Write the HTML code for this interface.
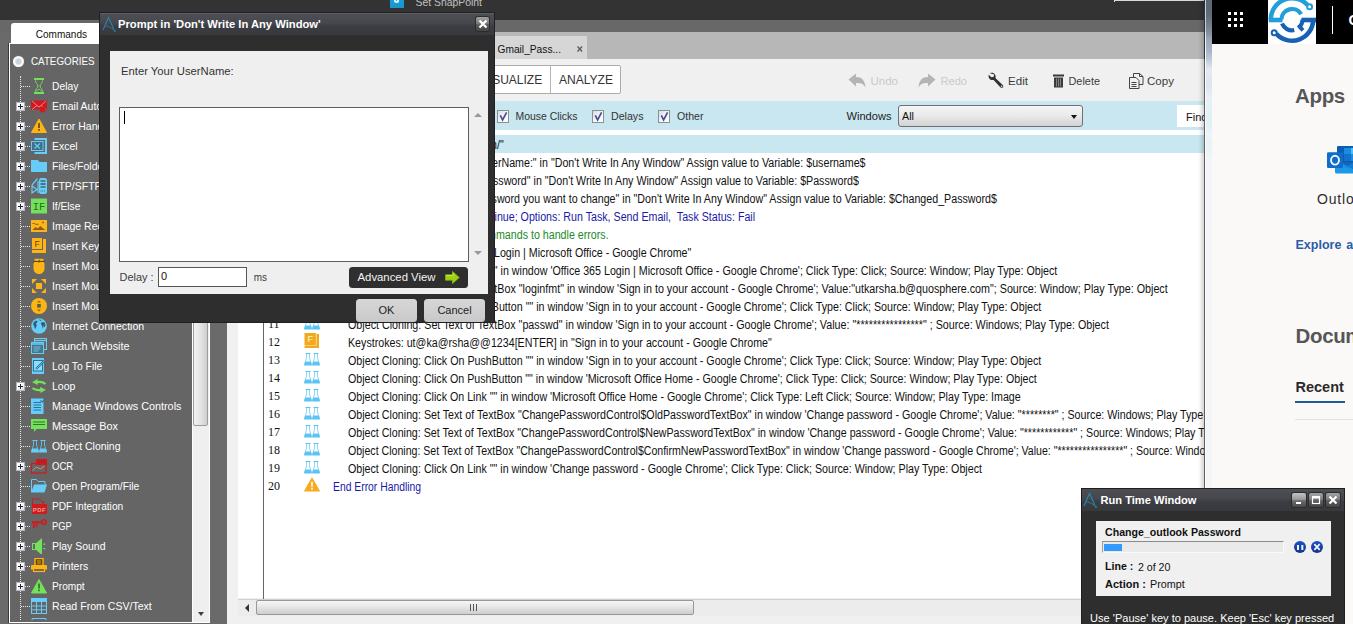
<!DOCTYPE html>
<html>
<head>
<meta charset="utf-8">
<title>Automation Anywhere</title>
<style>
html,body{margin:0;padding:0;}
body{width:1353px;height:624px;overflow:hidden;position:relative;background:#6a6a6a;font-family:"Liberation Sans",sans-serif;font-size:12px;color:#000;}
.a{position:absolute;}
.t{position:absolute;white-space:nowrap;line-height:1;}
/* sidebar */
#side{left:9px;top:43px;width:201px;height:580px;background:#656565;border:1px solid #fff;box-shadow:-1px 0 0 #3a3a3a;box-sizing:border-box;}
.ti{position:absolute;left:52px;color:#fff;font-size:11px;white-space:nowrap;line-height:14px;transform:scaleX(0.955);transform-origin:0 50%;}
.ic{position:absolute;left:31px;width:16px;height:16px;}
.pl{position:absolute;left:16px;width:7px;height:7px;border:1px solid #b4b4bc;background:linear-gradient(135deg,#ffffff 40%,#dcdce4);}
.pl:before{content:"";position:absolute;left:1px;top:3px;width:5px;height:1px;background:#223;}
.pl:after{content:"";position:absolute;left:3px;top:1px;width:1px;height:5px;background:#223;}
.dh{position:absolute;height:0;border-top:1px dotted #e8e8e8;}
/* list */
.row{position:absolute;left:238px;width:966px;height:18px;}
.ln{position:absolute;left:268px;font-family:"Liberation Serif",serif;font-size:12px;line-height:18px;color:#111;}
.lt{position:absolute;left:347px;font-size:12px;line-height:18px;white-space:nowrap;color:#111;transform-origin:0 50%;}
.li{position:absolute;left:304px;width:17px;height:16px;}
.cb{position:absolute;width:12.500px;height:12.500px;box-sizing:border-box;border:1px solid #8e8f8f;background:linear-gradient(135deg,#d4dae2,#f4f6f8 50%,#ffffff);}
.wb{width:13.500px;height:14px;border-radius:2px;background:linear-gradient(#a4a4a4,#7c7c7c 45%,#5c5c5c 55%,#444 100%);box-shadow:0 0 0 1px #2c2c2e;}
.btn{width:61px;height:22.5px;border-radius:3.5px;background:linear-gradient(#d6d6d6,#cfcfcf 60%,#c8c8c8);color:#1c1c1c;font-size:11px;line-height:23px;text-align:center;}
.btn span{display:inline-block;}
#x_snap{transform:translateX(0.50px) scaleX(0.9454);transform-origin:0 50%;}
#x_cmd{transform:translateX(0.75px) scaleX(0.9111);transform-origin:0 50%;}
#x_cat{transform:translateX(0.00px) scaleX(0.9328);transform-origin:0 50%;}
#x_tab{transform:translateX(0.50px) scaleX(0.9274);transform-origin:0 50%;}
#x_vis{transform:translateX(0.8px) scaleX(1.0);transform-origin:0 50%;}
#x_ana{transform:translateX(0.00px) scaleX(1.0038);transform-origin:0 50%;}
#x_undo{transform:translateX(-0.50px) scaleX(1.0458);transform-origin:0 50%;}
#x_redo{transform:translateX(-0.50px) scaleX(1.0077);transform-origin:0 50%;}
#x_edit{transform:translateX(0.00px) scaleX(1.0544);transform-origin:0 50%;}
#x_del{transform:translateX(0.50px) scaleX(0.9907);transform-origin:0 50%;}
#x_copy{transform:translateX(0.00px) scaleX(1.0511);transform-origin:0 50%;}
#x_mc{transform:translateX(0.50px) scaleX(0.9479);transform-origin:0 50%;}
#x_dl{transform:translateX(0.00px) scaleX(0.9665);transform-origin:0 50%;}
#x_ot{transform:translateX(0.00px) scaleX(0.9631);transform-origin:0 50%;}
#x_win{transform:translateX(0.50px) scaleX(1.0084);transform-origin:0 50%;}
#x_all{transform:translateX(0.00px) scaleX(0.9808);transform-origin:0 50%;}
#x_dt{transform:translateX(0.00px) scaleX(1.0185);transform-origin:0 50%;}
#x_eyu{transform:translateX(0.00px) scaleX(1.0244);transform-origin:0 50%;}
#x_dly{transform:translateX(0.50px) scaleX(0.9927);transform-origin:0 50%;}
#x_ms{transform:translateX(0.75px) scaleX(0.9031);transform-origin:0 50%;}
#x_adv{transform:translateX(0.50px) scaleX(1.0314);transform-origin:0 50%;}
#x_rtw{transform:translateX(0.50px) scaleX(1.0102);transform-origin:0 50%;}
#x_cop{transform:translateX(0.10px) scaleX(0.9617);transform-origin:0 50%;}
#x_use{transform:translateX(0.10px) scaleX(1.0037);transform-origin:0 50%;}
#x_ln{transform:translateX(0.00px) scaleX(0.9644);transform-origin:0 50%;}
#x_lv{transform:translateX(0.00px) scaleX(0.9631);transform-origin:0 50%;}
#x_ac{transform:translateX(0.00px) scaleX(0.9963);transform-origin:0 50%;}
#x_av{transform:translateX(0.00px) scaleX(0.9783);transform-origin:0 50%;}
</style>
</head>
<body>

<!-- ===== main app background ===== -->
<div class="a" id="topbar" style="left:0;top:0;width:1204px;height:20px;background:#333333;"></div>
<div class="a" style="left:0;top:20px;width:1204px;height:12px;background:#686868;"></div>
<div class="a" style="left:227px;top:32px;width:977px;height:27px;background:#b7b7b7;"></div>
<div class="a" style="left:227px;top:59px;width:977px;height:42px;background:#f0f0f0;"></div>
<div class="a" style="left:227px;top:101px;width:977px;height:29px;background:#c9e7f0;"></div>
<div class="a" style="left:227px;top:130px;width:977px;height:494px;background:#f0f0f0;"></div>
<div class="a" id="listbg" style="left:238px;top:130px;width:966px;height:468px;background:#ffffff;"></div>

<!-- SnapPoint -->
<div class="a" style="left:390px;top:-6px;width:13.500px;height:14px;background:linear-gradient(#16a6de,#1a94cc);"></div><div class="a" style="left:394px;top:-4px;width:5px;height:7px;border:2px solid #d8f0fa;border-top:0;border-radius:0 0 4px 4px;box-sizing:border-box;"></div>
<div class="t" id="x_snap" style="left:415px;top:-2.800px;font-size:11px;color:#c0c0c0;">Set SnapPoint</div>
<div class="a" style="left:1114px;top:0;width:90px;height:1px;background:#d8d8d8;"></div>
<div class="a" style="left:1114px;top:0;width:1px;height:2px;background:#d8d8d8;"></div>

<!-- ===== sidebar ===== -->
<div class="a" style="left:11px;top:23px;width:110px;height:21px;background:#ffffff;border-radius:3px 3px 0 0;z-index:2;"></div>
<div class="t" id="x_cmd" style="z-index:3;left:35px;top:28.5px;font-size:11px;color:#111;">Commands</div>
<div class="a" id="side"></div>
<div class="a" id="tree" style="left:0;top:0;width:193px;height:620px;overflow:hidden;">
<div class="a" style="left:13px;top:56px;width:11px;height:11px;border-radius:50%;background:radial-gradient(circle,#c4d2d5 0,#ccd9db 2.500px,#e8eeef 3.400px,#ffffff 4.200px,#f6f6f6 5.500px);box-shadow:0 0 1px #bbb;box-sizing:border-box;"></div>
<div class="t" id="x_cat" style="left:31px;top:55.8px;font-size:10.5px;color:#fff;">CATEGORIES</div>
<div class="a" style="left:20px;top:76px;width:0;height:548px;border-left:1px dotted #e8e8e8;"></div>
<div class="dh" style="left:21px;top:86px;width:9px;"></div>
<div class="ic" style="top:78px;"><svg width="16" height="16" viewBox="0 0 16 16" style="display:block;"><rect x="3" y="0" width="10" height="2" fill="#74e05c"/><rect x="3" y="14" width="10" height="2" fill="#74e05c"/><path d="M4.500 2.500c0 3 2.500 3.500 2.500 5.500s-2.500 2.500-2.500 5.500M11.500 2.500c0 3-2.500 3.500-2.500 5.500s2.500 2.500 2.500 5.500" fill="none" stroke="#74e05c" stroke-width="1"/><path d="M5 13.500l3-2.500 3 2.500" fill="none" stroke="#74e05c" stroke-width="0.900"/></svg></div>
<div class="ti" style="top:79px;transform:scaleX(0.934);">Delay</div>
<div class="dh" style="left:25px;top:106px;width:5px;"></div>
<div class="pl" style="top:102px;"></div>
<div class="ic" style="top:98px;"><svg width="16" height="16" viewBox="0 0 16 16" style="display:block;"><path d="M0 2.500h16v9h-16z" fill="#d11a1f"/><path d="M1 3l5 4.500-5 4M15 3l-5 4.500 5 4M6 7.500l2 1.500 2-1.500" fill="none" stroke="#f0a0a0" stroke-width="0.800"/><circle cx="11.500" cy="11.500" r="3" fill="#d11a1f"/></svg></div>
<div class="ti" style="top:99px;">Email Automation</div>
<div class="dh" style="left:25px;top:126px;width:5px;"></div>
<div class="pl" style="top:122px;"></div>
<div class="ic" style="top:118px;"><svg width="16" height="16" viewBox="0 0 16 16" style="display:block;"><path d="M8 1L15.500 14.500H0.500z" fill="#fdb515" stroke="#fdb515" stroke-width="1" stroke-linejoin="round"/><rect x="7.200" y="5" width="1.600" height="5" fill="#5a4208"/><rect x="7.200" y="11" width="1.600" height="1.700" fill="#5a4208"/></svg></div>
<div class="ti" style="top:119px;">Error Handling</div>
<div class="dh" style="left:25px;top:146px;width:5px;"></div>
<div class="pl" style="top:142px;"></div>
<div class="ic" style="top:138px;"><svg width="16" height="16" viewBox="0 0 16 16" style="display:block;"><path d="M3.500 1h11.500v14h-11.500" fill="none" stroke="#66cdf8" stroke-width="2"/><rect x="0.500" y="3.500" width="11.500" height="9" fill="#3f6f8c" stroke="#66cdf8" stroke-width="1"/><path d="M3.500 5.500l5.500 5M9 5.500l-5.500 5" stroke="#66cdf8" stroke-width="1.100"/></svg></div>
<div class="ti" style="top:139px;transform:scaleX(0.955);">Excel</div>
<div class="dh" style="left:25px;top:166px;width:5px;"></div>
<div class="pl" style="top:162px;"></div>
<div class="ic" style="top:158px;"><svg width="16" height="16" viewBox="0 0 16 16" style="display:block;"><path d="M0 2h7l1.500 2h7.500v10h-16z" fill="#66cdf8"/></svg></div>
<div class="ti" style="top:159px;">Files/Folders</div>
<div class="dh" style="left:25px;top:186px;width:5px;"></div>
<div class="pl" style="top:182px;"></div>
<div class="ic" style="top:178px;"><svg width="16" height="16" viewBox="0 0 16 16" style="display:block;"><rect x="8.500" y="0.500" width="7" height="15" rx="1.500" fill="#66cdf8" stroke="#66cdf8" stroke-width="1"/><rect x="9.500" y="2" width="5" height="2" fill="#3b8f7a"/><rect x="9.500" y="5" width="5" height="2" fill="#6a5aa0"/><rect x="9.500" y="8" width="5" height="2" fill="#3b8f7a"/><path d="M9.500 13h5" stroke="#3f6f8c" stroke-width="1" stroke-dasharray="1 0.700"/><path d="M6.500 0.500L1 7M7 3v12M1 8v7l5-3.500z" fill="none" stroke="#66cdf8" stroke-width="1.200"/></svg></div>
<div class="ti" style="top:179px;">FTP/SFTP</div>
<div class="dh" style="left:25px;top:206px;width:5px;"></div>
<div class="pl" style="top:202px;"></div>
<div class="ic" style="top:198px;"><svg width="16" height="16" viewBox="0 0 16 16" style="display:block;"><rect x="0" y="0.500" width="16" height="15" fill="#74e05c"/><text x="8" y="11.500" font-family="Liberation Mono,monospace" font-size="10.500" fill="#2a6e22" text-anchor="middle">IF</text></svg></div>
<div class="ti" style="top:199px;transform:scaleX(0.929);">If/Else</div>
<div class="dh" style="left:21px;top:226px;width:9px;"></div>
<div class="ic" style="top:218px;"><svg width="16" height="16" viewBox="0 0 16 16" style="display:block;"><rect x="0" y="2" width="16" height="12" fill="#fdb515"/><path d="M1.500 12l3-3 2 1.500 3-2.500 2 2 3 2z" fill="#8a5a20"/><path d="M1.500 5.500h2l1 0.800h3" fill="none" stroke="#8a5a20" stroke-width="1"/><path d="M11 4.500h2M12 3.500v2" stroke="#8a5a20" stroke-width="0.800"/></svg></div>
<div class="ti" style="top:219px;">Image Recognition</div>
<div class="dh" style="left:21px;top:246px;width:9px;"></div>
<div class="ic" style="top:238px;"><svg width="16" height="16" viewBox="0 0 16 16" style="display:block;"><rect x="1" y="0" width="10" height="11" fill="#fdb515"/><path d="M12 1h3v14h-14v-3h11z" fill="#fdb515"/><text x="6" y="8.800" font-family="Liberation Sans,sans-serif" font-size="8.500" fill="#5a4208" text-anchor="middle">F</text></svg></div>
<div class="ti" style="top:239px;">Insert Keystrokes</div>
<div class="dh" style="left:21px;top:266px;width:9px;"></div>
<div class="ic" style="top:258px;"><svg width="16" height="16" viewBox="0 0 16 16" style="display:block;"><path d="M2.500 7c0-3 1.500-5 5.500-5s5.500 2 5.500 5v3c0 3.500-2 6-5.500 6s-5.500-2.500-5.500-6z" fill="#fdb515"/><path d="M3.500 0.800h9v2h-9z" fill="#fdb515"/><path d="M2.500 3.500h11" stroke="#5a4208" stroke-width="1"/><path d="M9 2.200c-1.500-0.300-1.800 1.500-1 2.500" fill="none" stroke="#5a4208" stroke-width="0.900"/></svg></div>
<div class="ti" style="top:259px;">Insert Mouse Click</div>
<div class="dh" style="left:21px;top:286px;width:9px;"></div>
<div class="ic" style="top:278px;"><svg width="16" height="16" viewBox="0 0 16 16" style="display:block;"><rect x="5" y="5" width="6" height="6" fill="#fdb515"/><path d="M1 1h5l-5 5zM15 1v5l-5-5zM15 15h-5l5-5zM1 15v-5l5 5z" fill="#fdb515"/></svg></div>
<div class="ti" style="top:279px;">Insert Mouse Move</div>
<div class="dh" style="left:21px;top:306px;width:9px;"></div>
<div class="ic" style="top:298px;"><svg width="16" height="16" viewBox="0 0 16 16" style="display:block;"><circle cx="8" cy="8" r="8" fill="#fdb515"/><rect x="6.200" y="6" width="3.600" height="3.600" fill="#5b5b4a"/><path d="M8 2.500l2 2h-4zM8 13.500l2-2h-4z" fill="#8a6a10"/></svg></div>
<div class="ti" style="top:299px;">Insert Mouse Scroll</div>
<div class="dh" style="left:21px;top:326px;width:9px;"></div>
<div class="ic" style="top:318px;"><svg width="16" height="16" viewBox="0 0 16 16" style="display:block;"><circle cx="8" cy="8" r="7.800" fill="#66cdf8"/><path d="M2.500 4.500c1.500-1.500 3-2 4-1.500 0.500 1-0.500 1.500-1.500 2.500 0.500 1 1 1.500 0.500 2.500s-0.500 2-1 3c-1-0.500-0.800-2-1.500-3s-1-2.500-0.500-3.500zM10 5c1-1 2-1.500 3.500-0.500 1 1 1 3 0.500 4.500-0.500 0-1-0.500-1.200-1.500-0.500 0.500-0.300 2-1 3-0.500-1-0.500-2-1-3s-1.300-1.500-0.800-2.500zM8 1.500c1 0 2 0.300 2.500 1l-1.500 0.500z" fill="#3a5a70"/></svg></div>
<div class="ti" style="top:319px;transform:scaleX(0.96);">Internet Connection</div>
<div class="dh" style="left:21px;top:346px;width:9px;"></div>
<div class="ic" style="top:338px;"><svg width="16" height="16" viewBox="0 0 16 16" style="display:block;"><rect x="3.500" y="0.500" width="12" height="11" fill="none" stroke="#66cdf8" stroke-width="1"/><path d="M4 2.500h11" stroke="#66cdf8" stroke-width="1.400"/><rect x="0.500" y="4.500" width="12" height="11" fill="#4a7488" stroke="#66cdf8" stroke-width="1"/><path d="M1 6h11" stroke="#66cdf8" stroke-width="1.500"/><path d="M2.500 9h7M2.500 11h7M2.500 13h5" stroke="#66cdf8" stroke-width="0.900"/></svg></div>
<div class="ti" style="top:339px;transform:scaleX(0.985);">Launch Website</div>
<div class="dh" style="left:21px;top:366px;width:9px;"></div>
<div class="ic" style="top:358px;"><svg width="16" height="16" viewBox="0 0 16 16" style="display:block;"><rect x="1" y="0" width="12" height="16" fill="#66cdf8"/><rect x="2.500" y="2.500" width="9" height="10.500" fill="#8fdcfb" stroke="#2f6f95" stroke-width="1"/><path d="M5 11l8.500-8.500" stroke="#2f6f95" stroke-width="2.200"/><path d="M5.200 10.800l8.300-8.300" stroke="#66cdf8" stroke-width="0.800"/></svg></div>
<div class="ti" style="top:359px;transform:scaleX(0.936);">Log To File</div>
<div class="dh" style="left:25px;top:386px;width:5px;"></div>
<div class="pl" style="top:382px;"></div>
<div class="ic" style="top:378px;"><svg width="16" height="16" viewBox="0 0 16 16" style="display:block;"><path d="M14.500 6c-2-1.800-6-2.300-9-1.800" fill="none" stroke="#74e05c" stroke-width="2.200"/><path d="M6.500 1l-5.500 3.300 6 2.700z" fill="#74e05c"/><path d="M1.500 10c2 1.800 6 2.300 9 1.800" fill="none" stroke="#74e05c" stroke-width="2.200"/><path d="M9.500 15l5.500-3.300-6-2.700z" fill="#74e05c"/></svg></div>
<div class="ti" style="top:379px;transform:scaleX(0.957);">Loop</div>
<div class="dh" style="left:21px;top:406px;width:9px;"></div>
<div class="ic" style="top:398px;"><svg width="16" height="16" viewBox="0 0 16 16" style="display:block;"><rect x="0" y="0.500" width="12.500" height="15.500" fill="#66cdf8"/><path d="M2.500 4.500h7.500M2.500 7h7.500M2.500 9.500h7.500M2.500 12h7.500" stroke="#2f6f95" stroke-width="1.100"/><path d="M9.500 2.500l1.800 1.500 4-4" fill="none" stroke="#2f6f95" stroke-width="1.100"/></svg></div>
<div class="ti" style="top:399px;transform:scaleX(0.985);">Manage Windows Controls</div>
<div class="dh" style="left:21px;top:426px;width:9px;"></div>
<div class="ic" style="top:418px;"><svg width="16" height="16" viewBox="0 0 16 16" style="display:block;"><path d="M0 1h16v10h-10.500l-2.500 3v-3h-3z" fill="#74e05c"/><path d="M2 4h12M2 6.500h12" stroke="#2f7a2a" stroke-width="1.100"/></svg></div>
<div class="ti" style="top:419px;transform:scaleX(0.989);">Message Box</div>
<div class="dh" style="left:21px;top:446px;width:9px;"></div>
<div class="ic" style="top:438px;"><svg width="16" height="16" viewBox="0 0 16 16" style="display:block;"><path d="M1.5 2.500h5" fill="none" stroke="#66cdf8" stroke-width="1"/><path d="M2.5 3v4l-2.200 7h7.400l-2.200-7v-4" fill="none" stroke="#66cdf8" stroke-width="0.800"/><path d="M1.2 10.500h5.600l1.100 3.800h-7.800z" fill="#66cdf8"/><path d="M9.5 2.500h5" fill="none" stroke="#66cdf8" stroke-width="1"/><path d="M10.5 3v4l-2.200 7h7.400l-2.200-7v-4" fill="none" stroke="#66cdf8" stroke-width="0.800"/><path d="M9.2 10.500h5.600l1.100 3.800h-7.800z" fill="#66cdf8"/></svg></div>
<div class="ti" style="top:439px;transform:scaleX(0.949);">Object Cloning</div>
<div class="dh" style="left:25px;top:466px;width:5px;"></div>
<div class="pl" style="top:462px;"></div>
<div class="ic" style="top:458px;"><svg width="16" height="16" viewBox="0 0 16 16" style="display:block;"><rect x="5" y="1" width="11" height="6" fill="#d11a1f"/><path d="M8 2.500v3M10.500 2.500v3M13 2.500v3" stroke="#8a2a2a" stroke-width="0.900"/><rect x="0.500" y="5.500" width="14.500" height="9.500" fill="none" stroke="#d11a1f" stroke-width="1.200"/><path d="M1.500 12.500l4-3.500 4 2 4-3" fill="none" stroke="#c8a080" stroke-width="0.900"/></svg></div>
<div class="ti" style="top:459px;transform:scaleX(0.869);">OCR</div>
<div class="dh" style="left:21px;top:486px;width:9px;"></div>
<div class="ic" style="top:478px;"><svg width="16" height="16" viewBox="0 0 16 16" style="display:block;"><path d="M0.500 14v-12.500h5l1.500 2h7v3" fill="none" stroke="#66cdf8" stroke-width="1"/><path d="M3 6.500h13l-2.500 8h-13.500z" fill="#66cdf8"/></svg></div>
<div class="ti" style="top:479px;transform:scaleX(0.94);">Open Program/File</div>
<div class="dh" style="left:25px;top:506px;width:5px;"></div>
<div class="pl" style="top:502px;"></div>
<div class="ic" style="top:498px;"><svg width="16" height="16" viewBox="0 0 16 16" style="display:block;"><path d="M1.500 6v-5h7l3 3v2" fill="none" stroke="#d11a1f" stroke-width="1"/><circle cx="12.500" cy="4" r="0.900" fill="#d11a1f"/><rect x="1" y="6" width="15" height="10" fill="#d11a1f"/><text x="8.500" y="13.500" font-family="Liberation Sans,sans-serif" font-size="6" font-weight="bold" fill="#e8a08a" text-anchor="middle" letter-spacing="0.500">PDF</text></svg></div>
<div class="ti" style="top:499px;transform:scaleX(0.924);">PDF Integration</div>
<div class="dh" style="left:25px;top:526px;width:5px;"></div>
<div class="pl" style="top:522px;"></div>
<div class="ic" style="top:518px;"><svg width="16" height="16" viewBox="0 0 16 16" style="display:block;"><circle cx="13" cy="4" r="2.200" fill="none" stroke="#d11a1f" stroke-width="1.700"/><rect x="1" y="3.200" width="10" height="2" fill="#d11a1f"/><rect x="2" y="4" width="1.800" height="6" fill="#d11a1f"/><rect x="4.800" y="4" width="1.800" height="5" fill="#d11a1f"/></svg></div>
<div class="ti" style="top:519px;transform:scaleX(0.847);">PGP</div>
<div class="dh" style="left:25px;top:546px;width:5px;"></div>
<div class="pl" style="top:542px;"></div>
<div class="ic" style="top:538px;"><svg width="16" height="16" viewBox="0 0 16 16" style="display:block;"><rect x="1.500" y="5.500" width="3" height="6" fill="none" stroke="#74e05c" stroke-width="1"/><path d="M4.500 5.500l6.500-5.500v17l-6.500-5.500z" fill="#74e05c"/><rect x="12.500" y="5.500" width="1.600" height="1.300" fill="#74e05c"/><rect x="12.500" y="10" width="1.600" height="1.300" fill="#74e05c"/></svg></div>
<div class="ti" style="top:539px;transform:scaleX(0.951);">Play Sound</div>
<div class="dh" style="left:25px;top:566px;width:5px;"></div>
<div class="pl" style="top:562px;"></div>
<div class="ic" style="top:558px;"><svg width="16" height="16" viewBox="0 0 16 16" style="display:block;"><rect x="4" y="0.500" width="8" height="7" fill="#5a4208" stroke="#fdb515" stroke-width="1.400"/><path d="M6 3h4M6 5h4" stroke="#fdb515" stroke-width="0.900"/><path d="M1 7h14a1 1 0 0 1 1 1v3.500h-16v-3.500a1 1 0 0 1 1-1z" fill="#fdb515"/><rect x="2.500" y="10.500" width="11" height="3" fill="#656565" stroke="#fdb515" stroke-width="1.200"/></svg></div>
<div class="ti" style="top:559px;transform:scaleX(0.955);">Printers</div>
<div class="dh" style="left:25px;top:586px;width:5px;"></div>
<div class="pl" style="top:582px;"></div>
<div class="ic" style="top:578px;"><svg width="16" height="16" viewBox="0 0 16 16" style="display:block;"><path d="M8 1.500L15.500 15H0.500z" fill="#74e05c" stroke="#74e05c" stroke-width="1" stroke-linejoin="round"/><rect x="7.200" y="5.500" width="1.600" height="5" fill="#2a6e22"/><rect x="7.200" y="11.500" width="1.600" height="1.700" fill="#2a6e22"/></svg></div>
<div class="ti" style="top:579px;transform:scaleX(0.921);">Prompt</div>
<div class="dh" style="left:21px;top:606px;width:9px;"></div>
<div class="ic" style="top:598px;"><svg width="16" height="16" viewBox="0 0 16 16" style="display:block;"><rect x="0.500" y="0.500" width="15" height="15" fill="none" stroke="#66cdf8" stroke-width="1"/><rect x="0.500" y="0.500" width="15" height="3.500" fill="#66cdf8"/><path d="M5.500 0.500v15M10.500 0.500v15M0.500 8h15M0.500 11.800h15" stroke="#66cdf8" stroke-width="1"/></svg></div>
<div class="ti" style="top:599px;transform:scaleX(0.96);">Read From CSV/Text</div>
<div class="dh" style="left:21px;top:626px;width:9px;"></div>
<div class="ic" style="top:618px;"><svg width="16" height="16" viewBox="0 0 16 16" style="display:block;"><rect x="1" y="0.500" width="14" height="15" rx="1.500" fill="none" stroke="#66cdf8" stroke-width="1.200"/></svg></div>
<div class="ti" style="top:619px;">Read From XML</div>
</div>
<!-- sidebar scrollbar -->
<div class="a" style="left:192px;top:44px;width:18px;height:578px;background:#efefef;border-left:1px solid #fff;border-right:1px solid #fff;box-sizing:border-box;"></div>
<div class="a" style="left:193px;top:60px;width:15px;height:366px;border-radius:2px;background:linear-gradient(90deg,#f2f2f2,#e4e4e4 50%,#cfcfd2);border:1px solid #9c9c9c;box-sizing:border-box;"></div>
<div class="a" style="left:198px;top:612px;width:0;height:0;border-left:3.500px solid transparent;border-right:3.500px solid transparent;border-top:4px solid #404040;"></div>

<!-- ===== editor ===== -->
<div class="a" id="editor" style="left:0;top:0;width:1204px;height:624px;overflow:hidden;">
<!-- tab -->
<div class="a" style="left:440px;top:36px;width:147px;height:23px;background:#d6d6d6;"></div>
<div class="t" id="x_tab" style="left:497px;top:43.5px;font-size:11px;color:#111;">Gmail_Pass...</div>
<div class="a" style="left:577px;top:45.500px;"><svg width="6" height="6" viewBox="0 0 6 6" style="display:block"><path d="M0.500 0.500l4.600 5M5.100 0.500l-4.600 5" stroke="#5e5e5e" stroke-width="1.400"/></svg></div>
<!-- visualize / analyze -->
<div class="a" style="left:440px;top:65px;width:181px;height:29px;background:#fff;border:1px solid #acacac;box-sizing:border-box;border-radius:2px;"></div>
<div class="a" style="left:550px;top:65px;width:1px;height:29px;background:#b4b4b4;"></div>
<div class="t" id="x_vis" style="left:480px;top:73.600px;font-size:12px;color:#333;">VISUALIZE</div>
<div class="t" id="x_ana" style="left:559px;top:73.600px;font-size:12px;color:#333;">ANALYZE</div>
<!-- toolbar buttons -->
<div class="a" style="left:848px;top:73px;"><svg width="18" height="16" viewBox="0 0 18 16" style="display:block"><path d="M0.500 6.500L8 0.500v3.500c5.500 0 9 3 9.500 10.500c-2-4-5-5-9.500-4.500v3.500z" fill="#b4b4b4"/></svg></div>
<div class="t" id="x_undo" style="left:871px;top:75.6px;font-size:11px;color:#cacaca;">Undo</div>
<div class="a" style="left:918px;top:73px;"><svg width="18" height="16" viewBox="0 0 18 16" style="display:block"><path d="M17.500 6.500L10 0.500v3.500c-5.500 0-9 3-9.500 10.500c2-4 5-5 9.500-4.500v3.500z" fill="#b4b4b4"/></svg></div>
<div class="t" id="x_redo" style="left:941px;top:75.6px;font-size:11px;color:#cacaca;">Redo</div>
<div class="a" style="left:988px;top:72px;"><svg width="17" height="17" viewBox="0 0 17 17" style="display:block"><path d="M2 1.200c1.800-0.800 4-0.300 5 1.300 0.800 1.200 0.800 2.500 0.400 3.600l7.300 6.800c0.800 0.800 0.800 1.900 0.100 2.500-0.700 0.700-1.800 0.600-2.500-0.200l-6.700-7.300c-1.200 0.400-2.600 0.200-3.700-0.700-1.300-1.100-1.700-2.900-1.100-4.400l2.600 2.500 2.300-0.600 0.500-2.300z" fill="#333"/><circle cx="13.600" cy="14.200" r="0.800" fill="#f0f0f0"/></svg></div>
<div class="t" id="x_edit" style="left:1008px;top:75.6px;font-size:11px;color:#3c3c3c;">Edit</div>
<div class="a" style="left:1052.500px;top:73.500px;"><svg width="11" height="14" viewBox="0 0 11 14" style="display:block"><rect x="0" y="0.500" width="11" height="2" fill="#3a3a3a"/><rect x="1" y="3.500" width="9" height="10" fill="#3a3a3a"/><path d="M3.500 4.500v8M5.500 4.500v8M7.500 4.500v8" stroke="#9a9a9a" stroke-width="0.800"/></svg></div>
<div class="t" id="x_del" style="left:1068px;top:75.6px;font-size:11px;color:#3c3c3c;">Delete</div>
<div class="a" style="left:1128.500px;top:73px;"><svg width="15" height="16" viewBox="0 0 15 16" style="display:block"><path d="M4.500 4v-3.500h6l3.500 3v8h-4" fill="#f0f0f0" stroke="#444" stroke-width="1"/><path d="M10.500 0.500v3h3.500" fill="none" stroke="#444" stroke-width="1"/><path d="M0.500 4.500h6.500l3 3v8h-9.500z" fill="#f0f0f0" stroke="#444" stroke-width="1"/><path d="M2.500 9.500h5M2.500 11.500h5M2.500 13.500h5" stroke="#444" stroke-width="1"/></svg></div>
<div class="t" id="x_copy" style="left:1147px;top:75.6px;font-size:11px;color:#3c3c3c;">Copy</div>
<!-- filter bar -->
<div class="cb" style="left:496.5px;top:110px;"><svg width="11" height="11" viewBox="0 0 11 11" style="display:block"><path d="M2.300 4.300L4.600 8.800L8.600 1.300" fill="none" stroke="#4a4e98" stroke-width="1.700"/></svg></div>
<div class="t" id="x_mc" style="left:515px;top:110.8px;font-size:11px;color:#333;">Mouse Clicks</div>
<div class="cb" style="left:591.5px;top:110px;"><svg width="11" height="11" viewBox="0 0 11 11" style="display:block"><path d="M2.300 4.300L4.600 8.800L8.600 1.300" fill="none" stroke="#4a4e98" stroke-width="1.700"/></svg></div>
<div class="t" id="x_dl" style="left:611px;top:110.8px;font-size:11px;color:#333;">Delays</div>
<div class="cb" style="left:657.5px;top:110px;"><svg width="11" height="11" viewBox="0 0 11 11" style="display:block"><path d="M2.300 4.300L4.600 8.800L8.600 1.300" fill="none" stroke="#4a4e98" stroke-width="1.700"/></svg></div>
<div class="t" id="x_ot" style="left:677px;top:110.8px;font-size:11px;color:#333;">Other</div>
<div class="t" id="x_win" style="left:846px;top:110.8px;font-size:11px;color:#222;">Windows</div>
<div class="a" style="left:898px;top:105px;width:185px;height:22px;border:1px solid #707070;border-radius:3px;box-sizing:border-box;background:linear-gradient(#f6f6f6,#e9e9e9 50%,#d2d2d2);"></div>
<div class="t" id="x_all" style="left:902px;top:110.8px;font-size:11px;color:#111;">All</div>
<div class="a" style="left:1071px;top:115px;width:0;height:0;border-left:3.500px solid transparent;border-right:3.500px solid transparent;border-top:4px solid #111;"></div>
<div class="a" style="left:1177px;top:105px;width:30px;height:22px;background:#fff;"></div>
<div class="t" id="x_find" style="left:1186px;top:111.500px;font-size:11px;color:#111;">Find</div>
<!-- h scrollbar -->
<div class="a" style="left:238px;top:599px;width:966px;height:17px;background:#ececec;border-top:1px solid #d0d0d0;box-sizing:border-box;"></div>
<div class="a" style="left:256px;top:600px;width:438px;height:15px;border:1px solid #989898;border-radius:2px;box-sizing:border-box;background:linear-gradient(#f6f6f6,#e4e4e4 50%,#cdcdcd);"></div>
<div class="a" style="left:470px;top:604px;width:1px;height:7px;background:#555;box-shadow:3px 0 0 #555,6px 0 0 #555;"></div>
<div class="a" style="left:245px;top:604px;width:0;height:0;border-top:4px solid transparent;border-bottom:4px solid transparent;border-right:4px solid #333;"></div>

<div class="a" style="left:238px;top:135px;width:966px;height:18px;background:#c9e7f0;"></div>
<div class="a" style="left:263px;top:130px;width:1px;height:469px;background:#666;"></div>
<div class="ln" style="top:135px;">1</div>
<div class="lt" id="r1" style="left:341.3px;top:136px;color:#111;transform:scaleX(0.8892);">Open Browser: "portal.office.com/"</div>
<div class="ln" style="top:153px;">2</div>
<div class="li" style="top:154px;"><svg width="16" height="15" viewBox="0 0 16 15" style="display:block;"><path d="M8 1.200L15.300 14H0.700z" fill="#7ddc5c" stroke="#7ddc5c" stroke-width="1.200" stroke-linejoin="round"/><rect x="7.200" y="4.800" width="1.600" height="5" fill="#2f6a1e"/><rect x="7.200" y="10.800" width="1.600" height="1.700" fill="#2f6a1e"/></svg></div>
<div class="lt" id="r2" style="left:382.3px;top:154px;color:#111;transform:scaleX(0.8892);">Prompt: "Enter Your UserName:" in "Don't Write In Any Window" Assign value to Variable: $username$</div>
<div class="ln" style="top:171px;">3</div>
<div class="li" style="top:172px;"><svg width="16" height="15" viewBox="0 0 16 15" style="display:block;"><path d="M8 1.200L15.300 14H0.700z" fill="#7ddc5c" stroke="#7ddc5c" stroke-width="1.200" stroke-linejoin="round"/><rect x="7.200" y="4.800" width="1.600" height="5" fill="#2f6a1e"/><rect x="7.200" y="10.800" width="1.600" height="1.700" fill="#2f6a1e"/></svg></div>
<div class="lt" id="r3" style="left:383.3px;top:172px;color:#111;transform:scaleX(0.8892);">Prompt: "Enter Your Password" in "Don't Write In Any Window" Assign value to Variable: $Password$</div>
<div class="ln" style="top:189px;">4</div>
<div class="li" style="top:190px;"><svg width="16" height="15" viewBox="0 0 16 15" style="display:block;"><path d="M8 1.200L15.300 14H0.700z" fill="#7ddc5c" stroke="#7ddc5c" stroke-width="1.200" stroke-linejoin="round"/><rect x="7.200" y="4.800" width="1.600" height="5" fill="#2f6a1e"/><rect x="7.200" y="10.800" width="1.600" height="1.700" fill="#2f6a1e"/></svg></div>
<div class="lt" id="r4" style="left:384.3px;top:190px;color:#111;transform:scaleX(0.8892);">Prompt: "Enter the password you want to change" in "Don't Write In Any Window" Assign value to Variable: $Changed_Password$</div>
<div class="ln" style="top:207px;">5</div>
<div class="li" style="top:207px;"><svg width="16" height="15" viewBox="0 0 16 15" style="display:block;"><path d="M8 1.200L15.300 14H0.700z" fill="#f8a91e" stroke="#f8a91e" stroke-width="1.200" stroke-linejoin="round"/><rect x="7.200" y="4.800" width="1.600" height="5" fill="#fff"/><rect x="7.200" y="10.800" width="1.600" height="1.700" fill="#fff"/></svg></div>
<div class="lt" id="r5" style="left:332.2px;top:208px;color:#1a1aa6;transform:scaleX(0.8892);">Begin Error Handling; Action: Continue; Options: Run Task, Send Email,&nbsp; Task Status: Fail</div>
<div class="ln" style="top:225px;">6</div>
<div class="lt" id="r6" style="left:336.8px;top:226px;color:#1a8a2a;transform:scaleX(0.8892);">Comment: Please enter your commands to handle errors.</div>
<div class="ln" style="top:243px;">7</div>
<div class="lt" id="r7" style="left:354.0px;top:244px;color:#111;transform:scaleX(0.8892);">If Window Exists ("Office 365 Login | Microsoft Office - Google Chrome"</div>
<div class="ln" style="top:261px;">8</div>
<div class="li" style="top:263px;"><svg width="16" height="13" viewBox="0 0 16 13" style="display:block;"><path d="M1.5 0.500h5" fill="none" stroke="#5cc4f3" stroke-width="1"/><path d="M2.5 1v4l-2.200 7h7.400l-2.200-7v-4" fill="none" stroke="#6ccbf5" stroke-width="0.800"/><path d="M1.2 8.500h5.600l1.100 3.800h-7.800z" fill="#5cc4f3"/><path d="M9.5 0.500h5" fill="none" stroke="#5cc4f3" stroke-width="1"/><path d="M10.5 1v4l-2.200 7h7.400l-2.200-7v-4" fill="none" stroke="#6ccbf5" stroke-width="0.800"/><path d="M9.2 8.500h5.600l1.100 3.800h-7.800z" fill="#5cc4f3"/></svg></div>
<div class="lt" id="r8" style="left:348px;top:262px;color:#111;transform:scaleX(0.8907);">Object Cloning: Click On Link "" in window 'Office 365 Login | Microsoft Office - Google Chrome'; Click Type: Click; Source: Window; Play Type: Object</div>
<div class="ln" style="top:279px;">9</div>
<div class="li" style="top:281px;"><svg width="16" height="13" viewBox="0 0 16 13" style="display:block;"><path d="M1.5 0.500h5" fill="none" stroke="#5cc4f3" stroke-width="1"/><path d="M2.5 1v4l-2.200 7h7.400l-2.200-7v-4" fill="none" stroke="#6ccbf5" stroke-width="0.800"/><path d="M1.2 8.500h5.600l1.100 3.800h-7.800z" fill="#5cc4f3"/><path d="M9.5 0.500h5" fill="none" stroke="#5cc4f3" stroke-width="1"/><path d="M10.5 1v4l-2.200 7h7.400l-2.200-7v-4" fill="none" stroke="#6ccbf5" stroke-width="0.800"/><path d="M9.2 8.500h5.600l1.100 3.800h-7.800z" fill="#5cc4f3"/></svg></div>
<div class="lt" id="r9" style="left:348px;top:280px;color:#111;transform:scaleX(0.8942);">Object Cloning: Set Text of TextBox "loginfmt" in window 'Sign in to your account - Google Chrome'; Value:"utkarsha.b@quosphere.com"; Source: Window; Play Type: Object</div>
<div class="ln" style="top:297px;">10</div>
<div class="li" style="top:299px;"><svg width="16" height="13" viewBox="0 0 16 13" style="display:block;"><path d="M1.5 0.500h5" fill="none" stroke="#5cc4f3" stroke-width="1"/><path d="M2.5 1v4l-2.200 7h7.400l-2.200-7v-4" fill="none" stroke="#6ccbf5" stroke-width="0.800"/><path d="M1.2 8.500h5.600l1.100 3.800h-7.800z" fill="#5cc4f3"/><path d="M9.5 0.500h5" fill="none" stroke="#5cc4f3" stroke-width="1"/><path d="M10.5 1v4l-2.200 7h7.400l-2.200-7v-4" fill="none" stroke="#6ccbf5" stroke-width="0.800"/><path d="M9.2 8.500h5.600l1.100 3.800h-7.800z" fill="#5cc4f3"/></svg></div>
<div class="lt" id="r10" style="left:348px;top:298px;color:#111;transform:scaleX(0.8907);">Object Cloning: Click On PushButton "" in window 'Sign in to your account - Google Chrome'; Click Type: Click; Source: Window; Play Type: Object</div>
<div class="ln" style="top:315px;">11</div>
<div class="li" style="top:317px;"><svg width="16" height="13" viewBox="0 0 16 13" style="display:block;"><path d="M1.5 0.500h5" fill="none" stroke="#5cc4f3" stroke-width="1"/><path d="M2.5 1v4l-2.200 7h7.400l-2.200-7v-4" fill="none" stroke="#6ccbf5" stroke-width="0.800"/><path d="M1.2 8.500h5.600l1.100 3.800h-7.800z" fill="#5cc4f3"/><path d="M9.5 0.500h5" fill="none" stroke="#5cc4f3" stroke-width="1"/><path d="M10.5 1v4l-2.200 7h7.400l-2.200-7v-4" fill="none" stroke="#6ccbf5" stroke-width="0.800"/><path d="M9.2 8.500h5.600l1.100 3.800h-7.800z" fill="#5cc4f3"/></svg></div>
<div class="lt" id="r11" style="left:348px;top:316px;color:#111;transform:scaleX(0.8932);">Object Cloning: Set Text of TextBox "passwd" in window 'Sign in to your account - Google Chrome'; Value: "****************" ; Source: Windows; Play Type: Object</div>
<div class="ln" style="top:333px;">12</div>
<div class="li" style="top:333px;"><svg width="16" height="15" viewBox="0 0 16 15" style="display:block;"><rect x="0.500" y="0" width="11.500" height="12" fill="#f2aa1c"/><path d="M12.500 1h2.500v14h-14.500v-2.500h12z" fill="#f2aa1c"/><path d="M12 0.500v12h-11" fill="none" stroke="#f8cc6a" stroke-width="0.700"/><text x="6.200" y="9.300" font-family="Liberation Sans,sans-serif" font-size="9" fill="#fff6d8" text-anchor="middle">F</text></svg></div>
<div class="lt" id="r12" style="left:348px;top:334px;color:#111;transform:scaleX(0.8889);">Keystrokes: ut@ka@rsha@@1234[ENTER] in "Sign in to your account - Google Chrome"</div>
<div class="ln" style="top:351px;">13</div>
<div class="li" style="top:353px;"><svg width="16" height="13" viewBox="0 0 16 13" style="display:block;"><path d="M1.5 0.500h5" fill="none" stroke="#5cc4f3" stroke-width="1"/><path d="M2.5 1v4l-2.200 7h7.400l-2.200-7v-4" fill="none" stroke="#6ccbf5" stroke-width="0.800"/><path d="M1.2 8.500h5.600l1.100 3.800h-7.800z" fill="#5cc4f3"/><path d="M9.5 0.500h5" fill="none" stroke="#5cc4f3" stroke-width="1"/><path d="M10.5 1v4l-2.200 7h7.400l-2.200-7v-4" fill="none" stroke="#6ccbf5" stroke-width="0.800"/><path d="M9.2 8.500h5.600l1.100 3.800h-7.800z" fill="#5cc4f3"/></svg></div>
<div class="lt" id="r13" style="left:348px;top:352px;color:#111;transform:scaleX(0.8907);">Object Cloning: Click On PushButton "" in window 'Sign in to your account - Google Chrome'; Click Type: Click; Source: Window; Play Type: Object</div>
<div class="ln" style="top:369px;">14</div>
<div class="li" style="top:371px;"><svg width="16" height="13" viewBox="0 0 16 13" style="display:block;"><path d="M1.5 0.500h5" fill="none" stroke="#5cc4f3" stroke-width="1"/><path d="M2.5 1v4l-2.200 7h7.400l-2.200-7v-4" fill="none" stroke="#6ccbf5" stroke-width="0.800"/><path d="M1.2 8.500h5.600l1.100 3.800h-7.800z" fill="#5cc4f3"/><path d="M9.5 0.500h5" fill="none" stroke="#5cc4f3" stroke-width="1"/><path d="M10.5 1v4l-2.200 7h7.400l-2.200-7v-4" fill="none" stroke="#6ccbf5" stroke-width="0.800"/><path d="M9.2 8.500h5.600l1.100 3.800h-7.800z" fill="#5cc4f3"/></svg></div>
<div class="lt" id="r14" style="left:348px;top:370px;color:#111;transform:scaleX(0.889);">Object Cloning: Click On PushButton "" in window 'Microsoft Office Home - Google Chrome'; Click Type: Click; Source: Window; Play Type: Object</div>
<div class="ln" style="top:387px;">15</div>
<div class="li" style="top:389px;"><svg width="16" height="13" viewBox="0 0 16 13" style="display:block;"><path d="M1.5 0.500h5" fill="none" stroke="#5cc4f3" stroke-width="1"/><path d="M2.5 1v4l-2.200 7h7.400l-2.200-7v-4" fill="none" stroke="#6ccbf5" stroke-width="0.800"/><path d="M1.2 8.500h5.600l1.100 3.800h-7.800z" fill="#5cc4f3"/><path d="M9.5 0.500h5" fill="none" stroke="#5cc4f3" stroke-width="1"/><path d="M10.5 1v4l-2.200 7h7.400l-2.200-7v-4" fill="none" stroke="#6ccbf5" stroke-width="0.800"/><path d="M9.2 8.500h5.600l1.100 3.800h-7.800z" fill="#5cc4f3"/></svg></div>
<div class="lt" id="r15" style="left:348px;top:388px;color:#111;transform:scaleX(0.889);">Object Cloning: Click On Link "" in window 'Microsoft Office Home - Google Chrome'; Click Type: Left Click; Source: Window; Play Type: Image</div>
<div class="ln" style="top:405px;">16</div>
<div class="li" style="top:407px;"><svg width="16" height="13" viewBox="0 0 16 13" style="display:block;"><path d="M1.5 0.500h5" fill="none" stroke="#5cc4f3" stroke-width="1"/><path d="M2.5 1v4l-2.200 7h7.400l-2.200-7v-4" fill="none" stroke="#6ccbf5" stroke-width="0.800"/><path d="M1.2 8.500h5.600l1.100 3.800h-7.800z" fill="#5cc4f3"/><path d="M9.5 0.500h5" fill="none" stroke="#5cc4f3" stroke-width="1"/><path d="M10.5 1v4l-2.200 7h7.400l-2.200-7v-4" fill="none" stroke="#6ccbf5" stroke-width="0.800"/><path d="M9.2 8.500h5.600l1.100 3.800h-7.800z" fill="#5cc4f3"/></svg></div>
<div class="lt" id="r16" style="left:348px;top:406px;color:#111;transform:scaleX(0.8897);">Object Cloning: Set Text of TextBox "ChangePasswordControl$OldPasswordTextBox" in window 'Change password - Google Chrome'; Value: "********" ; Source: Windows; Play Type: Object</div>
<div class="ln" style="top:423px;">17</div>
<div class="li" style="top:425px;"><svg width="16" height="13" viewBox="0 0 16 13" style="display:block;"><path d="M1.5 0.500h5" fill="none" stroke="#5cc4f3" stroke-width="1"/><path d="M2.5 1v4l-2.200 7h7.400l-2.200-7v-4" fill="none" stroke="#6ccbf5" stroke-width="0.800"/><path d="M1.2 8.500h5.600l1.100 3.800h-7.800z" fill="#5cc4f3"/><path d="M9.5 0.500h5" fill="none" stroke="#5cc4f3" stroke-width="1"/><path d="M10.5 1v4l-2.200 7h7.400l-2.200-7v-4" fill="none" stroke="#6ccbf5" stroke-width="0.800"/><path d="M9.2 8.500h5.600l1.100 3.800h-7.800z" fill="#5cc4f3"/></svg></div>
<div class="lt" id="r17" style="left:348px;top:424px;color:#111;transform:scaleX(0.8863);">Object Cloning: Set Text of TextBox "ChangePasswordControl$NewPasswordTextBox" in window 'Change password - Google Chrome'; Value: "************" ; Source: Windows; Play Type: Object</div>
<div class="ln" style="top:441px;">18</div>
<div class="li" style="top:443px;"><svg width="16" height="13" viewBox="0 0 16 13" style="display:block;"><path d="M1.5 0.500h5" fill="none" stroke="#5cc4f3" stroke-width="1"/><path d="M2.5 1v4l-2.200 7h7.400l-2.200-7v-4" fill="none" stroke="#6ccbf5" stroke-width="0.800"/><path d="M1.2 8.500h5.600l1.100 3.800h-7.800z" fill="#5cc4f3"/><path d="M9.5 0.500h5" fill="none" stroke="#5cc4f3" stroke-width="1"/><path d="M10.5 1v4l-2.200 7h7.400l-2.200-7v-4" fill="none" stroke="#6ccbf5" stroke-width="0.800"/><path d="M9.2 8.500h5.600l1.100 3.800h-7.800z" fill="#5cc4f3"/></svg></div>
<div class="lt" id="r18" style="left:348px;top:442px;color:#111;transform:scaleX(0.882);">Object Cloning: Set Text of TextBox "ChangePasswordControl$ConfirmNewPasswordTextBox" in window 'Change password - Google Chrome'; Value: "****************" ; Source: Windows; Play Type: Object</div>
<div class="ln" style="top:459px;">19</div>
<div class="li" style="top:461px;"><svg width="16" height="13" viewBox="0 0 16 13" style="display:block;"><path d="M1.5 0.500h5" fill="none" stroke="#5cc4f3" stroke-width="1"/><path d="M2.5 1v4l-2.200 7h7.400l-2.200-7v-4" fill="none" stroke="#6ccbf5" stroke-width="0.800"/><path d="M1.2 8.500h5.600l1.100 3.800h-7.800z" fill="#5cc4f3"/><path d="M9.5 0.500h5" fill="none" stroke="#5cc4f3" stroke-width="1"/><path d="M10.5 1v4l-2.200 7h7.400l-2.200-7v-4" fill="none" stroke="#6ccbf5" stroke-width="0.800"/><path d="M9.2 8.500h5.600l1.100 3.800h-7.800z" fill="#5cc4f3"/></svg></div>
<div class="lt" id="r19" style="left:348px;top:460px;color:#111;transform:scaleX(0.8892);">Object Cloning: Click On Link "" in window 'Change password - Google Chrome'; Click Type: Click; Source: Window; Play Type: Object</div>
<div class="ln" style="top:477px;">20</div>
<div class="li" style="top:477px;"><svg width="16" height="15" viewBox="0 0 16 15" style="display:block;"><path d="M8 1.200L15.300 14H0.700z" fill="#f8a91e" stroke="#f8a91e" stroke-width="1.200" stroke-linejoin="round"/><rect x="7.200" y="4.800" width="1.600" height="5" fill="#fff"/><rect x="7.200" y="10.800" width="1.600" height="1.700" fill="#fff"/></svg></div>
<div class="lt" id="r20" style="left:333px;top:478px;color:#1a1aa6;transform:scaleX(0.8627);">End Error Handling</div>
</div>

<!-- ===== dialog ===== -->
<div class="a" id="dlg" style="z-index:5;left:100px;top:13px;width:395px;height:310px;background:#2e2e2e;">
<div class="a" style="left:0;top:0;width:395px;height:22px;background:linear-gradient(#66686e 0,#4c4e54 1.5px,#46484e 45%,#3c3d42 60%,#38393d 100%);"></div>
<div class="a" style="left:1.500px;top:3px;opacity:0.9;"><svg width="15" height="17" viewBox="0 0 15 17" style="display:block"><path d="M1 14L6.500 1.500 12 13.500" fill="none" stroke="#2a86a8" stroke-width="1.200"/><path d="M3.500 10c2 0 5 1 9 4.500" fill="none" stroke="#2a86a8" stroke-width="1"/><circle cx="13" cy="15" r="1" fill="#2a86a8"/></svg></div>
<div class="t" id="x_dt" style="left:18px;top:5.7px;font-size:11px;font-weight:bold;color:#fff;">Prompt in 'Don't Write In Any Window'</div>
<div class="a wb" style="left:375.500px;top:3.500px;height:14.500px;"><svg width="14" height="14" viewBox="0 0 14 14" style="display:block"><path d="M3.500 3.500l7 7M10.500 3.500l-7 7" stroke="#fff" stroke-width="2.200"/></svg></div>
<!-- content -->
<div class="a" style="left:10px;top:38px;width:378px;height:243px;background:#efefef;"></div>
<div class="t" id="x_eyu" style="left:21px;top:52.5px;font-size:11px;color:#333;">Enter Your UserName:</div>
<div class="a" style="left:19px;top:94px;width:350px;height:155px;background:#fff;border:1px solid #5c5c5c;box-sizing:border-box;"></div>
<div class="a" style="left:24px;top:98px;width:1px;height:13px;background:#000;"></div>
<div class="a" style="left:374px;top:100px;width:0;height:0;border-left:4px solid transparent;border-right:4px solid transparent;border-bottom:4px solid #9a9a9a;"></div>
<div class="a" style="left:374px;top:238px;width:0;height:0;border-left:4px solid transparent;border-right:4px solid transparent;border-top:4px solid #9a9a9a;"></div>
<div class="t" id="x_dly" style="left:19px;top:258.7px;font-size:11px;color:#3c3c3c;">Delay :</div>
<div class="a" style="left:58px;top:254px;width:89px;height:20px;background:#fff;border:1px solid #555;box-sizing:border-box;"></div>
<div class="t" id="x_zero" style="left:61px;top:257.7px;font-size:11px;color:#111;">0</div>
<div class="t" id="x_ms" style="left:153px;top:258.7px;font-size:11px;color:#3c3c3c;">ms</div>
<div class="a" style="left:249px;top:254.300px;width:119px;height:20.500px;background:#2f2f2f;border-radius:3.500px;"></div>
<div class="t" id="x_adv" style="left:257px;top:259.400px;font-size:11px;color:#f4f4f4;">Advanced View</div>
<div class="a" style="left:344.500px;top:258.300px;"><svg width="15" height="13" viewBox="0 0 15 13" style="display:block"><path d="M0.500 3.800h7v-3.300l6.800 6-6.800 6v-3.300h-7z" fill="#9fd012" stroke="#86b40c" stroke-width="0.800"/><path d="M1.200 4.600h7v-2.500" fill="none" stroke="#c4ea50" stroke-width="0.900"/></svg></div>
<!-- buttons -->
<div class="a btn" style="left:256px;top:286.300px;"><span>OK</span></div>
<div class="a btn" style="left:324px;top:286.300px;"><span>Cancel</span></div>

<div class="a" style="left:-1px;top:-1px;width:396px;height:311px;box-sizing:border-box;border:1px solid #202022;"></div>
</div>

<!-- ===== right chrome window ===== -->
<div class="a" style="left:1198px;top:0;width:6px;height:624px;background:linear-gradient(90deg,rgba(0,0,0,0),rgba(0,0,0,0.05) 40%,rgba(0,0,0,0.17));"></div>
<div class="a" id="chrome" style="left:1204px;top:0;width:149px;height:624px;background:#faf9f8;overflow:hidden;">
<div class="a" style="left:0;top:0;width:8px;height:624px;background:linear-gradient(#5c6570 0,#606975 14px,#747e8b 24px,#838e9c 32px,#9ca9ba 40px,#a9b7ca 52px,#c9d3e0 62px,#e4eaf2 70px,#dbe4f2 85px,#eaeff6 97px,#e4f1f7 106px,#e2f1f7 126px,#f0f4f8 134px,#e8f2f7 142px,#ecf3f8 150px,#f3f5f8 160px,#f5f5f6 100%);"></div>
<div class="a" style="left:0;top:0;width:1px;height:624px;background:linear-gradient(#2a3038 0,#2a3038 59px,#5e5e5e 59px,#606060 100%);"></div>
<div class="a" style="left:1px;top:0;width:1px;height:624px;background:linear-gradient(#c5d0dc 0,#c5d0dc 32px,#e4eaf0 32px,#ffffff 59px,#ffffff 100%);"></div>
<div class="a" style="left:8px;top:0;width:141px;height:44px;background:#000;"></div>
<div class="a" style="left:24px;top:12px;width:3px;height:3px;background:#fff;box-shadow:6px 0 0 #fff,12px 0 0 #fff,0 6px 0 #fff,6px 6px 0 #fff,12px 6px 0 #fff,0 12px 0 #fff,6px 12px 0 #fff,12px 12px 0 #fff;"></div>
<div class="a" style="left:64px;top:0;width:48px;height:44px;background:#fff;"></div>
<div class="a" style="left:64px;top:0;"><svg width="48" height="44" viewBox="0 0 48 44" style="display:block"><path d="M2.80 19.50A21.2 21.2 0 0 1 39.75 5.31" fill="none" stroke="#229fdb" stroke-width="4.600"/><path d="M0.8 20H14.5" stroke="#229fdb" stroke-width="4.600"/><path d="M13.50 19.50A10.5 10.5 0 0 1 33.09 14.25" fill="none" stroke="#229fdb" stroke-width="4.200"/><circle cx="41.6" cy="6.8" r="2.500" fill="#fff" stroke="#229fdb" stroke-width="2"/><path d="M33.500 20H48" stroke="#1762b5" stroke-width="4.600"/><path d="M45.20 19.50A21.2 21.2 0 0 1 8.25 33.69" fill="none" stroke="#1762b5" stroke-width="4.600"/><circle cx="6.200" cy="32.800" r="2.500" fill="#fff" stroke="#1762b5" stroke-width="2"/><path d="M34.50 19.50A10.5 10.5 0 0 1 30.46 27.77" fill="none" stroke="#1762b5" stroke-width="4.200"/><path d="M30.500 25.500L35 30.300" stroke="#1762b5" stroke-width="3.900"/><path d="M26.25 30.06A10.8 10.8 0 0 1 13.99 23.55" fill="none" stroke="#1762b5" stroke-width="4.200"/></svg></div>
<div class="a" style="left:128px;top:6px;width:1px;height:28px;background:#fff;"></div>
<div class="t" style="left:144.5px;top:13.3px;font-size:14.5px;color:#fff;font-weight:bold;">Office</div>
<div class="t" id="x_apps" style="left:91px;top:86.1px;font-size:20.5px;color:#565656;font-weight:bold;letter-spacing:-0.35px;">Apps</div>
<div class="a" style="left:123px;top:146px;"><svg width="30" height="28" viewBox="0 0 30 28" style="display:block"><rect x="10" y="0" width="20" height="22" rx="1" fill="#0c5db4"/><rect x="17" y="2" width="7" height="6.500" fill="#1c8ce0"/><rect x="24" y="2" width="6" height="6.500" fill="#48c0f8"/><rect x="17" y="8.500" width="7" height="6.500" fill="#1272cc"/><rect x="24" y="8.500" width="6" height="6.500" fill="#1c8ce0"/><path d="M8 16h22v11.600h-20.500a1.500 1.500 0 0 1-1.500-1.500z" fill="#1b98e6"/><path d="M10 15l20 10v-10z" fill="#0e5cb0" opacity="0.850"/><path d="M17 21l13-6v8z" fill="#1580d8" opacity="0.700"/><rect x="0" y="6.200" width="16" height="15.800" rx="1.300" fill="#0f6cc8"/><ellipse cx="8" cy="14.200" rx="4" ry="4.400" fill="none" stroke="#eef8ff" stroke-width="1.900"/></svg></div>
<div class="t" id="x_outl" style="left:113px;top:192px;font-size:14px;color:#2e2d2c;letter-spacing:0.8px;">Outlook</div>
<div class="t" id="x_expl" style="left:91.5px;top:239px;font-size:12.5px;color:#2a5caa;font-weight:bold;word-spacing:1.5px;">Explore all</div>
<div class="t" id="x_docs" style="left:91.5px;top:326.1px;font-size:20.5px;color:#565656;font-weight:bold;letter-spacing:-0.35px;">Documents</div>
<div class="t" id="x_rec" style="left:91.5px;top:379.5px;font-size:14.5px;color:#2a2a2a;font-weight:bold;">Recent</div>
<div class="a" style="left:91px;top:401px;width:50px;height:2px;background:#1c5d94;"></div>
<div class="a" style="left:91px;top:419px;width:60px;height:1px;background:#e1e1e1;"></div>

</div>

<!-- ===== run time window ===== -->
<div class="a" id="rtw" style="left:1081px;top:488px;width:264px;height:136px;background:#2e2e2e;overflow:hidden;">
<div class="a" style="left:0;top:0;width:264px;height:23px;background:linear-gradient(#66686e 0,#4c4e54 1.5px,#46484e 45%,#3c3d42 60%,#38393d 100%);"></div>
<div class="a" style="left:2px;top:4px;"><svg width="15" height="17" viewBox="0 0 15 17" style="display:block"><path d="M1 14L6.500 1.500 12 13.500" fill="none" stroke="#2a86a8" stroke-width="1.200"/><path d="M3.500 10c2 0 5 1 9 4.500" fill="none" stroke="#2a86a8" stroke-width="1"/><circle cx="13" cy="15" r="1" fill="#2a86a8"/></svg></div>
<div class="t" id="x_rtw" style="left:19px;top:6.7px;font-size:11px;font-weight:bold;color:#fff;">Run Time Window</div>
<div class="a wb" style="left:211px;top:5.300px;background:linear-gradient(#c4c4c4,#9a9a9a 45%,#6c6c6c 55%,#4a4a4a 100%);"><svg width="14" height="14" viewBox="0 0 14 14" style="display:block"><rect x="4" y="9" width="5" height="2" fill="#fff"/></svg></div>
<div class="a wb" style="left:228px;top:5.300px;"><svg width="14" height="14" viewBox="0 0 14 14" style="display:block"><rect x="3.500" y="3.500" width="7" height="7" fill="none" stroke="#fff" stroke-width="1.200"/><rect x="3.500" y="3.500" width="7" height="2" fill="#fff"/></svg></div>
<div class="a wb" style="left:245px;top:5.300px;"><svg width="14" height="14" viewBox="0 0 14 14" style="display:block"><path d="M3.500 3.500l7 7M10.500 3.500l-7 7" stroke="#fff" stroke-width="2.200"/></svg></div>
<div class="a" style="left:15px;top:33px;width:235px;height:75px;background:#f0f0f0;"></div>
<div class="t" id="x_cop" style="left:23.500px;top:38.500px;font-size:11px;font-weight:bold;color:#111;">Change_outlook Password</div>
<div class="a" style="left:21px;top:53px;width:182px;height:12px;background:#eaeaea;border:1px solid #f8f8f8;border-top-color:#8a8a8a;border-left-color:#a0a0a0;box-sizing:border-box;"></div>
<div class="a" style="left:23px;top:56px;width:18px;height:7px;background:#3399ff;"></div>
<div class="a" style="left:213px;top:53px;width:12px;height:12px;border-radius:50%;background:linear-gradient(#1d54c2,#16308e);"></div>
<div class="a" style="left:216px;top:56.500px;width:2px;height:5px;background:#e8f6ff;box-shadow:4.300px 0 0 #e8f6ff;"></div>
<div class="a" style="left:230px;top:53px;width:12px;height:12px;border-radius:50%;background:linear-gradient(#1d54c2,#16308e);"></div>
<div class="a" style="left:230px;top:53px;"><svg width="12" height="12" viewBox="0 0 12 12" style="display:block"><path d="M3.300 3.200l5.400 5.600M8.700 3.200l-5.400 5.600" stroke="#f0f8ff" stroke-width="1.700"/></svg></div>
<div class="t" id="x_ln" style="left:23.500px;top:72.700px;font-size:11px;font-weight:bold;color:#111;">Line :</div>
<div class="t" id="x_lv" style="left:57.300px;top:73.500px;font-size:11px;color:#111;">2 of 20</div>
<div class="t" id="x_ac" style="left:23.500px;top:90.500px;font-size:11px;font-weight:bold;color:#111;">Action :</div>
<div class="t" id="x_av" style="left:69.300px;top:90.700px;font-size:11px;color:#111;">Prompt</div>
<div class="t" id="x_use" style="left:8.500px;top:124.700px;font-size:11px;color:#fff;">Use 'Pause' key to pause. Keep 'Esc' key pressed</div>

<div class="a" style="left:0;top:0;width:264px;height:140px;box-sizing:border-box;border:1px solid #1e1e20;"></div>
</div>

</body>
</html>
